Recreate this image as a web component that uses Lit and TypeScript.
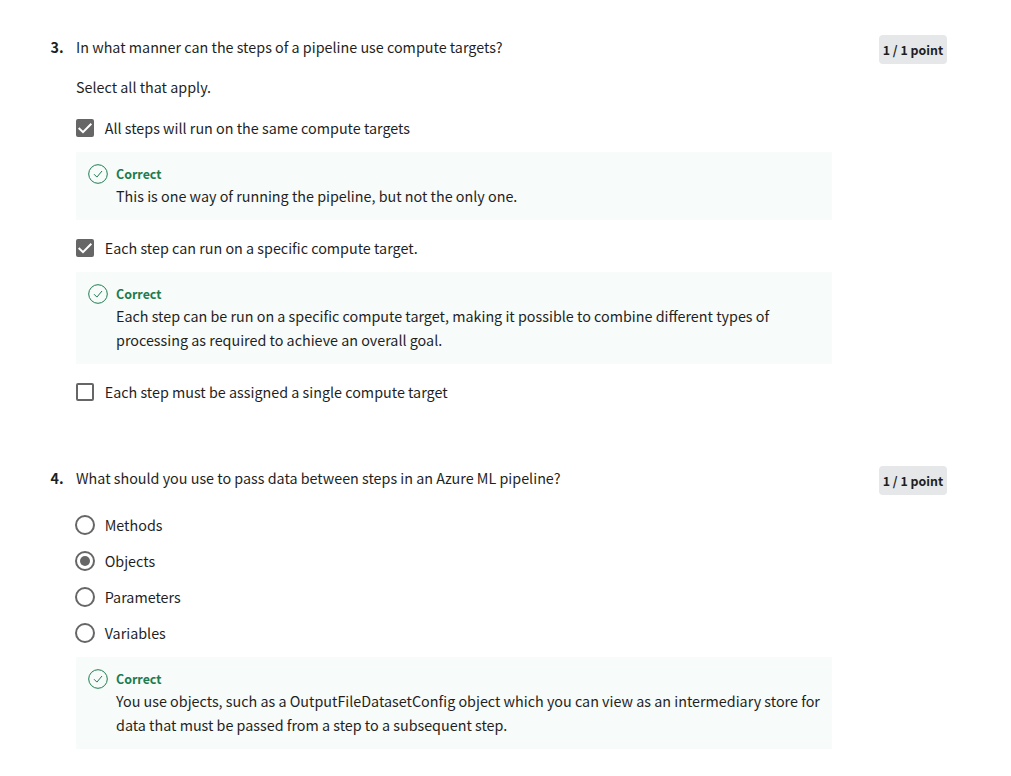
import { LitElement, html, css, svg, nothing } from "lit";
import { customElement, property } from "lit/decorators.js";

interface Option {
  label: string;
  checked?: boolean;
  feedback?: string[];
}

interface Question {
  number: number;
  prompt: string;
  hint?: string;
  kind: "checkbox" | "radio";
  options: Option[];
  feedback?: string[];
}

const questions: Question[] = [
  {
    number: 3,
    prompt: "In what manner can the steps of a pipeline use compute targets?",
    hint: "Select all that apply.",
    kind: "checkbox",
    options: [
      {
        label: "All steps will run on the same compute targets",
        checked: true,
        feedback: ["This is one way of running the pipeline, but not the only one."],
      },
      {
        label: "Each step can run on a specific compute target.",
        checked: true,
        feedback: [
          "Each step can be run on a specific compute target, making it possible to combine different types of",
          "processing as required to achieve an overall goal.",
        ],
      },
      { label: "Each step must be assigned a single compute target" },
    ],
  },
  {
    number: 4,
    prompt: "What should you use to pass data between steps in an Azure ML pipeline?",
    kind: "radio",
    options: [
      { label: "Methods" },
      { label: "Objects", checked: true },
      { label: "Parameters" },
      { label: "Variables" },
    ],
    feedback: [
      "You use objects, such as a OutputFileDatasetConfig object which you can view as an intermediary store for",
      "data that must be passed from a step to a subsequent step.",
    ],
  },
];

@customElement("quiz-feedback")
export class QuizFeedback extends LitElement {
  @property({ attribute: false }) lines: string[] = [];

  static styles = css`
    :host {
      display: block;
    }
    .panel {
      display: flex;
      gap: 8px;
      padding: 12px 0 12px 12px;
      background: #f7fbf9;
    }
    svg {
      flex: none;
      display: block;
    }
    .title {
      font-size: 12.45px;
      font-weight: 700;
      line-height: 20px;
      color: #1d7c50;
    }
    .line {
      line-height: 24px;
      white-space: nowrap;
    }
  `;

  render() {
    return html`<div class="panel">
      <svg width="20" height="20" viewBox="0 0 20 20" fill="none" stroke="#1d7c50">
        <circle cx="10" cy="10" r="9.3" stroke-width="1" />
        <path d="M6 10.2 8.9 13.1 14 7" stroke-width="1" />
      </svg>
      <div>
        <div class="title">Correct</div>
        ${this.lines.map((l) => html`<div class="line">${l}</div>`)}
      </div>
    </div>`;
  }
}

@customElement("quiz-option")
export class QuizOption extends LitElement {
  @property() kind: "checkbox" | "radio" = "checkbox";
  @property() label = "";
  @property({ type: Boolean }) checked = false;

  static styles = css`
    :host {
      display: block;
    }
    .row {
      display: flex;
      align-items: center;
      height: 24px;
      gap: 9.7px;
      margin-left: -1px;
    }
    svg {
      flex: none;
      display: block;
    }
    .label {
      line-height: 24px;
      white-space: nowrap;
    }
  `;

  private glyph() {
    if (this.kind === "radio") {
      return svg`<circle cx="10" cy="10" r="9" fill="none" stroke="#666" stroke-width="2" />
        ${this.checked ? svg`<circle cx="10" cy="10" r="5" fill="#666" />` : nothing}`;
    }
    return this.checked
      ? svg`<rect x="1" y="1" width="18" height="18" rx="2" fill="#666" />
          <path d="M3.7 10 8 14.2 16.3 5.8" fill="none" stroke="#fff" stroke-width="2" />`
      : svg`<rect x="2" y="2" width="16" height="16" rx="1" fill="none" stroke="#666" stroke-width="2" />`;
  }

  render() {
    return html`<div class="row">
      <svg width="20" height="20" viewBox="0 0 20 20">${this.glyph()}</svg>
      <span class="label">${this.label}</span>
    </div>`;
  }
}

@customElement("app-root")
export class AppRoot extends LitElement {
  static styles = css`
    :host {
      display: block;
      height: 776px;
      overflow: hidden;
      background: #fff;
      color: #1f1f1f;
      font-family: "Noto Sans CJK SC", "Noto Sans", sans-serif;
      font-size: 14.33px;
    }
    .page {
      padding: 35px 64px 0 50.5px;
    }
    .question {
      display: grid;
      grid-template-columns: 25.5px 756px auto;
      align-items: start;
    }
    .question + .question {
      margin-top: 62px;
    }
    .number {
      font-weight: 700;
      line-height: 24px;
    }
    .prompt,
    .hint {
      line-height: 24px;
      white-space: nowrap;
    }
    .hint {
      margin-top: 16px;
    }
    .options {
      display: flex;
      flex-direction: column;
      margin-top: 17px;
    }
    .options.radio {
      margin-top: 23px;
      gap: 12px;
    }
    .options.checkbox quiz-option + quiz-feedback {
      margin: 12px 0 16px;
    }
    .after {
      margin-top: 12px;
    }
    .score {
      justify-self: end;
      box-sizing: border-box;
      width: 68px;
      height: 29px;
      border-radius: 4px;
      background: #e5e7e8;
      font-size: 12.4px;
      font-weight: 700;
      line-height: 30px;
      text-align: center;
      white-space: nowrap;
    }
  `;

  render() {
    return html`<main class="page">
      ${questions.map(
        (q) => html`<section class="question">
          <div class="number">${q.number}.</div>
          <div>
            <div class="prompt">${q.prompt}</div>
            ${q.hint ? html`<div class="hint">${q.hint}</div>` : nothing}
            <div class="options ${q.kind}">
              ${q.options.map(
                (o) => html`<quiz-option .kind=${q.kind} .label=${o.label} .checked=${!!o.checked}></quiz-option>
                  ${o.feedback ? html`<quiz-feedback .lines=${o.feedback}></quiz-feedback>` : nothing}`
              )}
            </div>
            ${q.feedback ? html`<quiz-feedback class="after" .lines=${q.feedback}></quiz-feedback>` : nothing}
          </div>
          <div class="score">1 / 1 point</div>
        </section>`
      )}
    </main>`;
  }
}
